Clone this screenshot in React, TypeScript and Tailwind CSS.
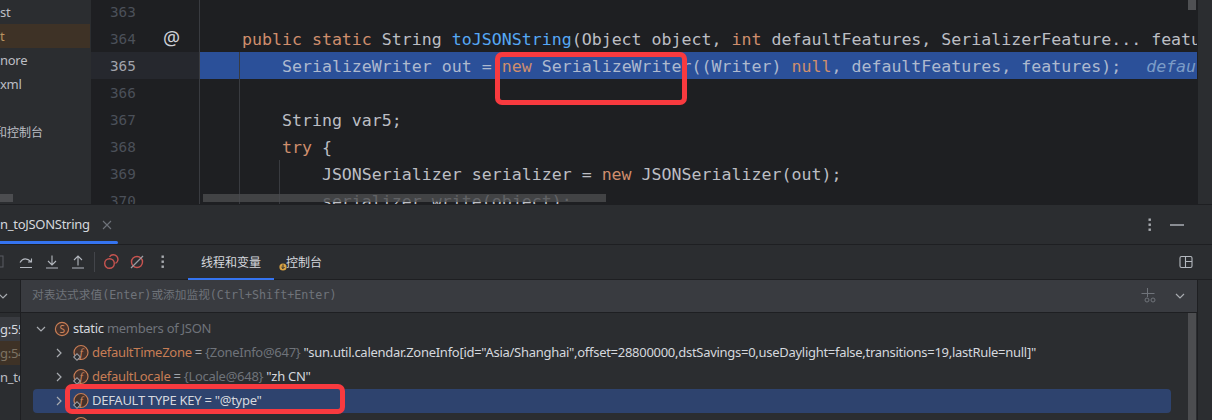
import type { ReactNode } from 'react'

const mono = "font-['DejaVu_Sans_Mono','Noto_Sans_CJK_SC',monospace]"
const ui = "font-['Noto_Sans','Noto_Sans_CJK_SC',sans-serif]"

function K({ children }: { children: ReactNode }) {
  return <span className="text-[#cf8e6d]">{children}</span>
}

function CodeRow({ children, selected }: { children?: ReactNode; selected?: boolean }) {
  return (
    <div className={`h-[27px] whitespace-pre pl-[2px] leading-[29px] ${selected ? 'bg-[#2b5099] text-[#adb9cf]' : ''}`}>
      {children}
    </div>
  )
}

function GutterRow({ n, icon, current }: { n: number; icon?: boolean; current?: boolean }) {
  return (
    <div className={`relative h-[27px] pl-[19px] leading-[29px] ${current ? 'bg-[#26282e] text-[#a1a3ab]' : 'text-[#4b5059]'}`}>
      {n}
      {icon && <span className={`absolute left-[72px] -top-[1px] text-[19px] text-[#ced0d6] ${ui}`}>@</span>}
    </div>
  )
}

function ProjectRow({ children, active }: { children?: ReactNode; active?: boolean }) {
  return (
    <div className={`h-6 overflow-hidden whitespace-nowrap leading-6 ${active ? 'bg-[#3e3226] text-[#b8925f]' : ''}`}>{children}</div>
  )
}

function Chevron({ down, className }: { down?: boolean; className?: string }) {
  return (
    <svg width="10" height="10" viewBox="0 0 10 10" fill="none" stroke="#a8abb0" strokeWidth="1.2" className={className}>
      <path d={down ? 'M1 3l4 4 4-4' : 'M3 1l4 4-4 4'} />
    </svg>
  )
}

function Kebab({ className }: { className?: string }) {
  return (
    <svg width="4" height="14" viewBox="0 0 4 14" fill="#a8abb0" className={className}>
      <rect x="0.5" y="0.5" width="2.4" height="2.4" />
      <rect x="0.5" y="5.5" width="2.4" height="2.4" />
      <rect x="0.5" y="10.5" width="2.4" height="2.4" />
    </svg>
  )
}

function FieldIcon() {
  return (
    <svg width="18" height="18" viewBox="0 0 18 18" className="shrink-0">
      <circle cx="10" cy="8.5" r="7" fill="#45322b" stroke="#c77d55" strokeWidth="1.2" />
      <text x="10" y="12.5" textAnchor="middle" fontSize="12" fontStyle="italic" fontFamily="Liberation Serif" fill="#d18a62">f</text>
      <rect x="3.7" y="10.7" width="4.6" height="4.6" transform="rotate(45 6 13)" fill="#2b2d30" stroke="#9a9da3" strokeWidth="1.1" />
    </svg>
  )
}

function StaticIcon() {
  return (
    <svg width="16" height="16" viewBox="0 0 16 16" className="shrink-0">
      <circle cx="8" cy="8" r="6.6" fill="#45322b" stroke="#c77d55" strokeWidth="1.2" />
      <text x="8" y="11.5" textAnchor="middle" fontSize="10" fontFamily="Noto Sans" fill="#d18a62">S</text>
    </svg>
  )
}

function FieldRow({ name, value, children, selected }: { name: string; value?: boolean; children: ReactNode; selected?: boolean }) {
  return (
    <div className={`ml-[12px] flex h-6 items-center whitespace-pre pl-[22px] ${selected ? 'rounded-[4px] bg-[#2e436e]' : ''}`}>
      <Chevron className="-ml-[1px] mr-[7px] shrink-0" />
      <FieldIcon />
      <span className={`ml-[3px] ${value ? 'text-[#c77d55]' : 'text-[#d5d8de]'}`}>{name}</span>
      {children}
    </div>
  )
}

export default function App() {
  return (
    <div className={`relative flex h-[420px] w-[1212px] flex-col overflow-hidden bg-[#2b2d30] text-[13px] tracking-[-0.28px] text-[#bcbec4] ${ui}`}>
      {/* top: project tree + editor */}
      <div className="flex h-[204px] shrink-0">
        <div className="relative w-[91px] shrink-0 pr-px">
          <ProjectRow>st</ProjectRow>
          <ProjectRow active>t</ProjectRow>
          <ProjectRow>nore</ProjectRow>
          <ProjectRow>xml</ProjectRow>
          <ProjectRow />
          <ProjectRow>
            <span className="-ml-[5px] text-[12px] tracking-normal">和控制台</span>
          </ProjectRow>
          <div className="absolute bottom-[2px] left-0 h-2 w-[13px] bg-[#4c4d50]" />
        </div>
        <div className={`w-[109px] shrink-0 overflow-hidden border-r border-[#393b40] bg-[#1e1f22] text-[14.3px] tracking-normal ${mono}`}>
          <div className="-mt-[2px]">
            <GutterRow n={363} />
            <GutterRow n={364} icon />
            <GutterRow n={365} current />
            <GutterRow n={366} />
            <GutterRow n={367} />
            <GutterRow n={368} />
            <GutterRow n={369} />
            <GutterRow n={370} />
          </div>
        </div>
        <div className={`relative flex-1 overflow-hidden bg-[#1e1f22] text-[16.6px] tracking-normal ${mono}`}>
          <div className="-mt-[2px]">
            <CodeRow />
            <CodeRow>
              {'    '}
              <K>public static</K> String <span className="text-[#56a8f5]">toJSONString</span>(Object object, <K>int</K> defaultFeatures, SerializerFeature... features) {'{'}
            </CodeRow>
            <CodeRow selected>
              {'        '}SerializeWriter out = <K>new</K> SerializeWriter((Writer) <K>null</K>, defaultFeatures, features);{'  '}
              <span className="ml-[5px] italic text-[#7c9cc7]">defaultFeatures: 989</span>
            </CodeRow>
            <CodeRow />
            <CodeRow>{'        '}String var5;</CodeRow>
            <CodeRow>
              {'        '}
              <K>try</K> {'{'}
            </CodeRow>
            <CodeRow>
              {'            '}JSONSerializer serializer = <K>new</K> JSONSerializer(out);
            </CodeRow>
            <CodeRow>{'            '}serializer.write(object);</CodeRow>
          </div>
          {/* indent guides */}
          <div className="absolute bottom-0 left-[39px] top-[52px] w-px bg-[#393b40]" />
          <div className="absolute bottom-0 left-[79px] top-[160px] w-px bg-[#393b40]" />
          {/* scrollbars */}
          <div className="absolute bottom-[2px] left-[3px] h-2 w-[403px] bg-[#4b4c4f]/80" />
          <div className="absolute right-[1px] top-0 h-[10px] w-2 bg-[#4f5053]" />
        </div>
        <div className="w-[15px] shrink-0 border-l border-[#1e1f22]" />
      </div>

      {/* debug tool window */}
      <div className="flex-1 border-t border-[#1e1f22]">
        <div className="relative flex h-[39px] items-center">
          <span className="whitespace-nowrap text-[#d5d8de]">n_toJSONString</span>
          <svg width="10" height="10" viewBox="0 0 10 10" stroke="#6f737a" strokeWidth="1.1" className="ml-[12px] mt-[1px]">
            <path d="M1 1l8 8M9 1l-8 8" />
          </svg>
          <div className="absolute bottom-0 left-0 h-[3px] w-[118px] rounded-r-sm bg-[#3574f0]" />
          <div className="ml-auto mr-[28px] flex items-center gap-[18px]">
            <Kebab />
            <div className="h-[2px] w-[14px] bg-[#8a8d93]" />
          </div>
        </div>

        {/* toolbar */}
        <div className="flex h-[36px] items-center border-y border-[#1e1f22] pr-[18px]">
          <svg width="4" height="14" viewBox="0 0 4 14" fill="none" stroke="#5a5d63" strokeWidth="1" className="shrink-0">
            <rect x="-2" y="1" width="5" height="11" />
          </svg>
          <svg width="16" height="16" viewBox="0 0 16 16" fill="none" stroke="#b4b8bf" strokeWidth="1.1" className="ml-[14px] shrink-0">
            <path d="M2 8.5C5 3.5 9 4 13.5 8M13.5 4.5V8H10M2 13.5h12" />
          </svg>
          <svg width="16" height="16" viewBox="0 0 16 16" fill="none" stroke="#b4b8bf" strokeWidth="1.1" className="ml-[10px] shrink-0">
            <path d="M8 1.5v9M4 7l4 4 4-4M2 14h12" />
          </svg>
          <svg width="16" height="16" viewBox="0 0 16 16" fill="none" stroke="#b4b8bf" strokeWidth="1.1" className="ml-[10px] shrink-0">
            <path d="M8 11.5V2.5M4 6l4-4 4 4M2 14h12" />
          </svg>
          <div className="ml-[8px] h-5 w-px bg-[#43454a]" />
          <svg width="16" height="16" viewBox="0 0 16 16" fill="none" stroke="#c75450" strokeWidth="1.4" className="ml-[8px] shrink-0">
            <circle cx="6.5" cy="9.5" r="4.8" />
            <path d="M6.5 2.8a4.6 4.6 0 1 1 6 6.6" />
          </svg>
          <svg width="16" height="16" viewBox="0 0 16 16" fill="none" className="ml-[10px] shrink-0">
            <circle cx="8" cy="8" r="5.5" stroke="#c75450" strokeWidth="1.4" />
            <path d="M14 2L2 14" stroke="#9a9da3" strokeWidth="1.2" />
          </svg>
          <Kebab className="ml-[16px] shrink-0" />
          <div className="relative ml-[23px] flex h-full w-[86px] items-center justify-center pt-[1px] text-[12px] tracking-normal text-[#d5d8de]">
            线程和变量
            <div className="absolute -bottom-px left-0 h-[2px] w-full bg-[#3574f0]" />
          </div>
          <div className="relative ml-[12px] pt-[1px] text-[12px] tracking-normal text-[#d5d8de]">
            控制台
            <svg width="8" height="8" viewBox="0 0 8 8" className="absolute -left-[7px] top-[10px]">
              <circle cx="4" cy="4" r="3.6" fill="#d9a343" />
              <path d="M4 1.5v4M2.4 4L4 5.6 5.6 4" fill="none" stroke="#2b2d30" strokeWidth="1" />
            </svg>
          </div>
          <svg width="16" height="16" viewBox="0 0 16 16" fill="none" stroke="#b4b8bf" strokeWidth="1.1" className="ml-auto shrink-0">
            <rect x="2" y="2.5" width="12" height="11" rx="1.5" />
            <path d="M7.5 2.5v11M7.5 7.5H14" />
          </svg>
        </div>

        {/* threads + variables */}
        <div className="flex h-[140px]">
          <div className="w-[21px] shrink-0 overflow-hidden border-r border-[#1e1f22]">
            <div className="flex h-[33px] items-center border-b border-[#1e1f22]">
              <Chevron down className="-ml-[2px]" />
            </div>
            <div className="h-1" />
            <div className="h-6 whitespace-nowrap bg-[#393b40] leading-6 text-[#d5d8de]">g:55</div>
            <div className="h-6 whitespace-nowrap bg-[#3e3226] leading-6 text-[#7d7263]">g:54</div>
            <div className="h-6 whitespace-nowrap leading-6 text-[#bcbec4]">n_to</div>
          </div>
          <div className="relative flex-1 overflow-hidden">
            <div className={`flex h-[33px] items-center border-b border-[#1e1f22] bg-[#393b40] pl-[11px] text-[11.7px] tracking-normal text-[#6f737a] ${mono}`}>
              对表达式求值(Enter)或添加监视(Ctrl+Shift+Enter)
              <svg width="16" height="18" viewBox="0 0 16 18" fill="none" stroke="#6f737a" strokeWidth="1" className="ml-auto mr-[18px] shrink-0">
                <path d="M6.5 1v9M0.5 6.5h13" />
                <circle cx="6" cy="13" r="2" />
                <circle cx="12" cy="13" r="2" />
              </svg>
              <Chevron down className="mr-[12px]" />
            </div>
            <div className="pr-[26px] pt-[4px]">
              <div className="ml-[14px] flex h-6 items-center whitespace-pre">
                <Chevron down className="ml-[1px] mr-[8px] shrink-0" />
                <StaticIcon />
                <span className="ml-[3px] text-[#d5d8de]">static</span>
                <span className="text-[#6f737a]"> members of JSON</span>
              </div>
              <FieldRow name="defaultTimeZone" value>
                <span className="text-[#a0a3a9]"> = </span>
                <span className="text-[#6f737a]">{'{ZoneInfo@647} '}</span>
                <span className="text-[#d5d8de]">"sun.util.calendar.ZoneInfo[id="Asia/Shanghai",offset=28800000,dstSavings=0,useDaylight=false,transitions=19,lastRule=null]"</span>
              </FieldRow>
              <FieldRow name="defaultLocale" value>
                <span className="text-[#a0a3a9]"> = </span>
                <span className="text-[#6f737a]">{'{Locale@648} '}</span>
                <span className="text-[#d5d8de]">"zh CN"</span>
              </FieldRow>
              <FieldRow name="DEFAULT TYPE KEY" selected>
                <span className="text-[#d5d8de]"> = "@type"</span>
              </FieldRow>
              <div className="ml-[34px] flex h-6 items-center">
                <span className="w-[16px]" />
                <FieldIcon />
              </div>
            </div>
            <div className="absolute bottom-0 right-[1px] top-[33px] w-2 bg-[#4c4d50]" />
          </div>
          <div className="w-[15px] shrink-0 border-l border-[#1e1f22]" />
        </div>
      </div>

      {/* annotation boxes */}
      <div className="pointer-events-none absolute left-[495px] top-[52px] h-[53px] w-[192px] rounded-[7px] border-[5px] border-[#f83a3f]" />
      <div className="pointer-events-none absolute left-[65px] top-[384px] h-[30px] w-[280px] rounded-[7px] border-[5px] border-[#f83a3f]" />
    </div>
  )
}
